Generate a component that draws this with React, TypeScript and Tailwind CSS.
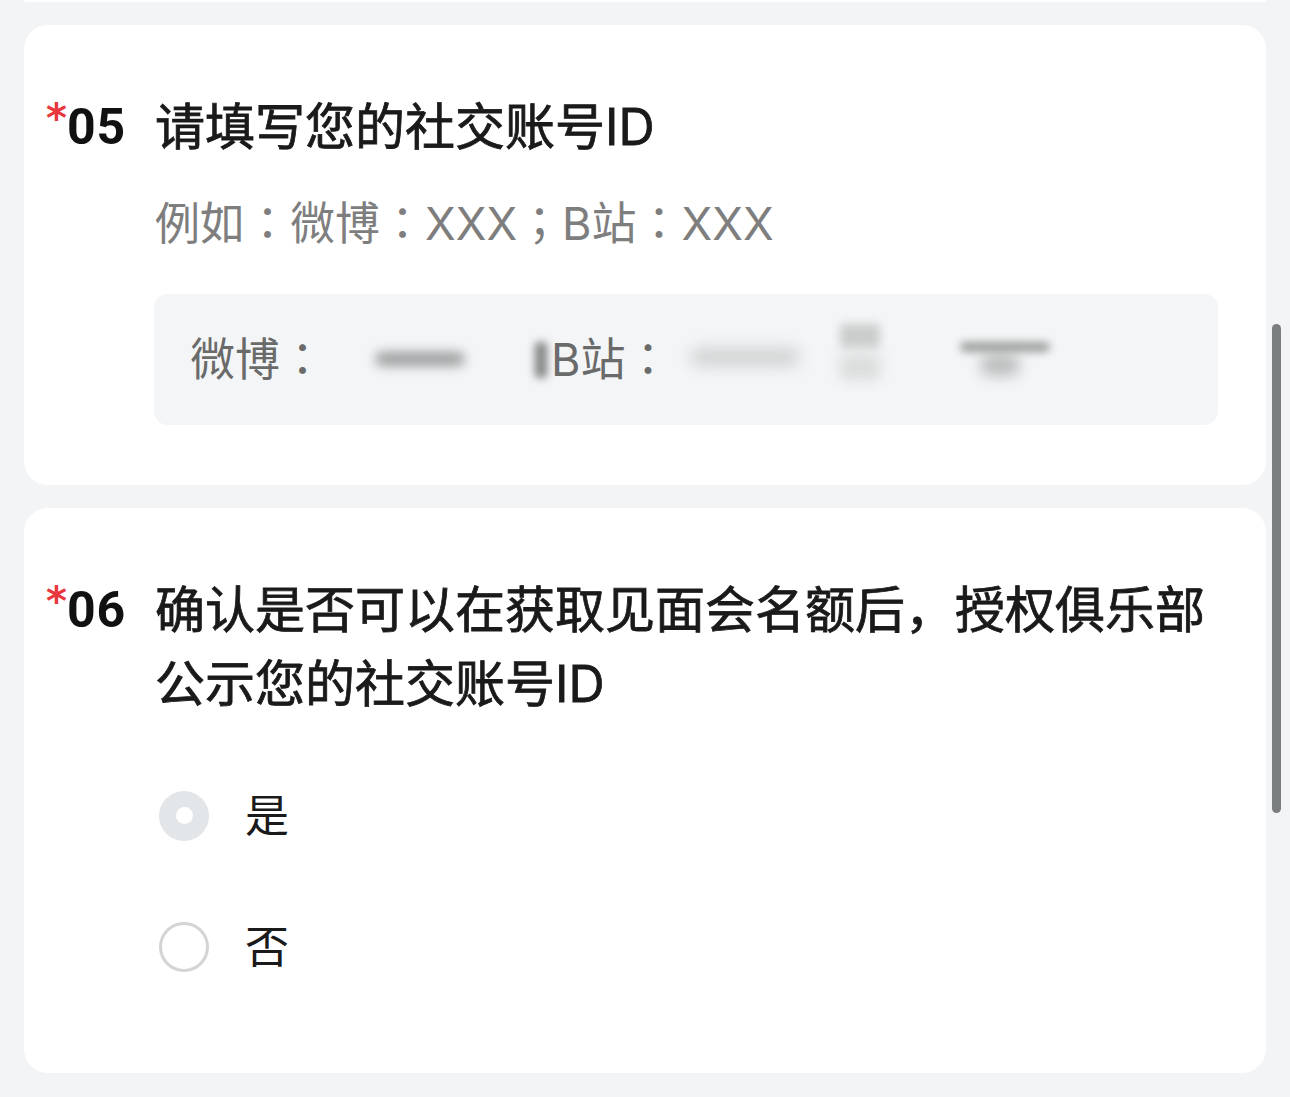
import { useState } from 'react';

const FONT = "font-['Inter','Noto_Sans_CJK_SC',sans-serif]";
const FONT_TC = "font-['Inter','Noto_Sans_CJK_TC',sans-serif]";

/* ---------- Question title ---------- */
function QuestionTitle({ no, text }: { no: string; text: string }) {
  return (
    <div className="flex items-start">
      <div className="w-[131px] shrink-0 pl-[22px] flex items-start h-[74px]">
        <span className="text-[#e8373d] text-[40px] leading-none font-bold font-['DejaVu_Sans',sans-serif] mt-[8px]">*</span>
        <span className="text-[#111] text-[50px] leading-[74px] font-bold font-['Roboto',sans-serif] tracking-[1px]">{no}</span>
      </div>
      <h2 className="text-[50px] leading-[74px] font-normal text-[#1a1a1a] pr-[40px] [-webkit-text-stroke:0.8px_#1a1a1a]">{text}</h2>
    </div>
  );
}

/* ---------- Radio option ---------- */
function RadioRow({ label, checked, onClick }: { label: string; checked: boolean; onClick: () => void }) {
  return (
    <button onClick={onClick} className="h-[131px] flex items-center pl-[135px] w-full text-left">
      {checked ? (
        <span className="w-[50px] h-[50px] rounded-full bg-[#e3e6e8] flex items-center justify-center">
          <span className="w-[17px] h-[17px] rounded-full bg-white" />
        </span>
      ) : (
        <span className="w-[50px] h-[50px] rounded-full border-[3px] border-[#d2d4d6] bg-white" />
      )}
      <span className="ml-[36px] text-[44px] text-[#1a1a1a]">{label}</span>
    </button>
  );
}

export default function App() {
  const [answer, setAnswer] = useState<'yes' | 'no'>('yes');

  return (
    <div className={`relative w-[1290px] h-[1097px] overflow-hidden bg-[#f2f4f5] ${FONT}`}>
      <div className="flex flex-col gap-[23px] px-[24px] w-full">
        {/* tail of previous card */}
        <div className="h-[2px] bg-white rounded-b-[24px]" />

        {/* Q05 */}
        <section className="bg-white rounded-[24px] pt-[65px] pb-[60px]">
          <QuestionTitle no="05" text="请填写您的社交账号ID" />
          <p className={`pl-[131px] mt-[28px] text-[45px] leading-[64px] text-[#7e7e7e] ${FONT_TC}`}>例如：微博：XXX；B站：XXX</p>
          <div className={`ml-[130px] mr-[48px] mt-[38px] h-[131px] rounded-[14px] bg-[#f3f5f6] flex items-center pl-[36px] text-[45px] text-[#6a6a6a] overflow-hidden ${FONT_TC}`}>
            <span>微博：</span>
            <span className="relative w-[210px] h-[60px]">
              <span className="absolute left-[50px] top-[22px] w-[90px] h-[14px] rounded-full bg-[#777] blur-[6px] opacity-70" />
            </span>
            <span className="w-[12px] h-[36px] rounded bg-[#666] blur-[4px] opacity-80 mr-[4px]" />
            <span>B站：</span>
            <span className="relative w-[420px] h-[60px]">
              <span className="absolute left-[20px] top-[18px] w-[110px] h-[18px] rounded-full bg-[#bbb] blur-[8px] opacity-60" />
              <span className="absolute left-[170px] top-[-6px] w-[40px] h-[24px] rounded bg-[#bbb] blur-[5px] opacity-70" />
              <span className="absolute left-[170px] top-[24px] w-[40px] h-[26px] rounded bg-[#ccc] blur-[7px] opacity-60" />
              <span className="absolute left-[290px] top-[12px] w-[90px] h-[10px] rounded-full bg-[#777] blur-[4px] opacity-70" />
              <span className="absolute left-[310px] top-[24px] w-[40px] h-[22px] rounded-full bg-[#999] blur-[7px] opacity-60" />
            </span>
          </div>
        </section>

        {/* Q06 */}
        <section className="bg-white rounded-[24px] pt-[65px] pb-[61px]">
          <QuestionTitle no="06" text="确认是否可以在获取见面会名额后，授权俱乐部公示您的社交账号ID" />
          <div className="mt-[29px]">
            <RadioRow label="是" checked={answer === 'yes'} onClick={() => setAnswer('yes')} />
            <RadioRow label="否" checked={answer === 'no'} onClick={() => setAnswer('no')} />
          </div>
        </section>
      </div>

      {/* scrollbar overlay */}
      <div className="absolute left-[1272px] top-[324px] w-[9px] h-[489px] rounded-full bg-[#7b7e7e]" />
    </div>
  );
}
